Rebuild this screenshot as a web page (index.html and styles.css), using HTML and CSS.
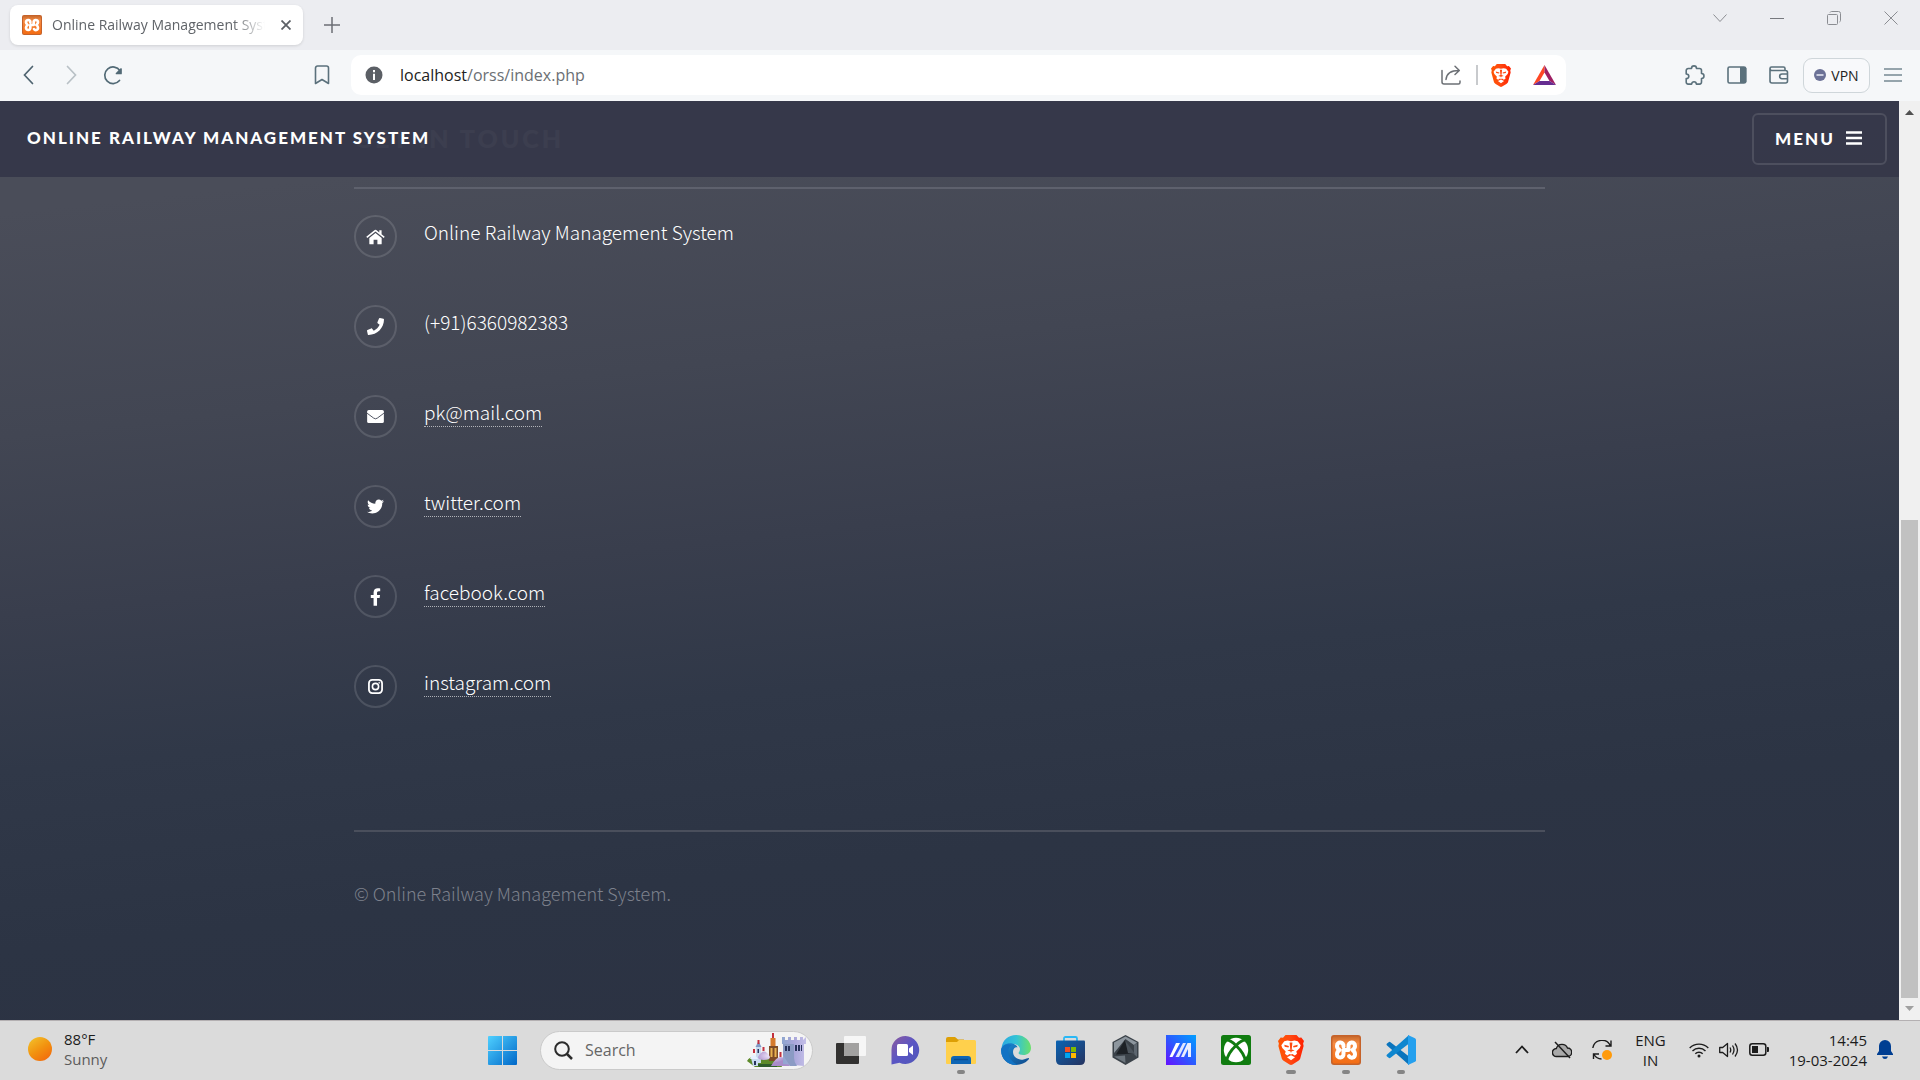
FILE: index.html
```html
<!DOCTYPE html>
<html lang="en">
<head>
<meta charset="utf-8">
<title>Online Railway Management System</title>
<link rel="stylesheet" href="styles.css">
</head>
<body>
<svg class="sprite" aria-hidden="true">
  <defs>
    <linearGradient id="g-brave" x1="0" x2="1"><stop offset="0" stop-color="#ff5500"/><stop offset="0.45" stop-color="#ff4a12"/><stop offset="1" stop-color="#ff2000"/></linearGradient>
    <linearGradient id="g-xampp" x1="0" y1="0" x2="0" y2="1"><stop offset="0" stop-color="#c96a2c"/><stop offset="0.25" stop-color="#f58a42"/><stop offset="1" stop-color="#f36c13"/></linearGradient>
  </defs>
  <symbol id="brave" viewBox="0 0 26 30">
    <path fill="url(#g-brave)" d="M7.5 0h11l2.5 2.8 2.3-.3L26 6l-.9 2.6.5 2.4-3.3 12.2c-.4 1.4-1.200 2-2.300 2.800L14.500 29.500c-.9.600-2.100.600-3 0L6 26c-1.100-.8-1.900-1.400-2.300-2.800L.4 11l.5-2.400L0 6l2.700-3.500 2.300.3z"/>
    <path fill="#fff" d="M9.500 5.500 13 6.200l3.500-.7 3.200.7 3 4-1 2.700-3.400 3.600.7 2.300-2.200 1.700-2.500-1.600-1.300.6-1.300-.6-2.500 1.600L7 18.800l.7-2.300-3.400-3.600-1-2.700 3-4zM9 22.200l4-2 4 2-4 3z"/>
    <path fill="#ff4a12" d="m6.300 9.800 4.600 1.200-.4 1.400-3.800-.7zM19.700 9.800l-4.600 1.200.4 1.400 3.800-.7zM11.600 7.500h2.800l-.6 6.500h-1.600zM9.300 15.800l3.700-1.700 3.700 1.700-3 .4-.7 1.800-.7-1.800z"/>
  </symbol>
  <symbol id="xampp" viewBox="0 0 30 30">
    <rect width="30" height="30" rx="3" fill="#c5622a"/>
    <rect x="1.500" y="1.500" width="27" height="27" rx="2" fill="url(#g-xampp)"/>
    <path fill="none" stroke="#fff" stroke-width="4" stroke-linecap="round" stroke-linejoin="round" d="M12.500 11.500C13 6.500 6 6 6 11c0 2 1 3 2.500 4C7 16 6 17 6 19.200c0 4.800 7 4.300 6.500-.7V15h5v-3.500C17 6.500 24 6 24 11c0 2-1 3-2.500 4 1.500 1 2.500 2 2.500 4.200 0 4-4.500 4.300-6 2"/>
  </symbol>
</svg>

<div class="tabstrip">
  <div class="tab">
    <svg class="tab-favicon"><use href="#xampp"/></svg>
    <span class="tab-title">Online Railway Management System</span>
    <button class="plain" aria-label="Close tab"><svg width="10" height="10" viewBox="0 0 10 10"><path d="M.5.5l9 9M9.500.5l-9 9" stroke="#5c6066" stroke-width="1.800"/></svg></button>
  </div>
  <button class="plain new-tab" aria-label="New tab"><svg width="16" height="16" viewBox="0 0 16 16"><path d="M8 0v16M0 8h16" stroke="#6b6e74" stroke-width="1.500"/></svg></button>
  <div class="window-controls">
    <button class="plain" aria-label="Search tabs"><svg width="14" height="14" viewBox="0 0 14 14" fill="none" stroke="#8b8d92"><path d="M.5 3.500 7 10.500l6.500-7"/></svg></button>
    <button class="plain" aria-label="Minimize"><svg width="14" height="14" viewBox="0 0 14 14"><path d="M0 7.500h14" stroke="#77797e"/></svg></button>
    <button class="plain" aria-label="Restore"><svg width="14" height="14" viewBox="0 0 14 14" fill="none" stroke="#8b8d92"><rect x=".5" y="3.500" width="10" height="10" rx="1"/><path d="M3 1.500Q3.500.5 4.500.5h7q2 0 2 2v7q0 1-1 1.500"/></svg></button>
    <button class="plain" aria-label="Close"><svg width="14" height="14" viewBox="0 0 14 14"><path d="M.5.5l13 13M13.500.5l-13 13" stroke="#8b8d92"/></svg></button>
  </div>
</div>

<div class="toolbar">
  <div class="nav-buttons">
    <button class="plain" aria-label="Back"><svg width="20" height="20" viewBox="0 0 20 20" fill="none" stroke="#4f6470" stroke-width="1.700" stroke-linecap="round"><path d="M13.500 1.500 5.500 10l8 8.500"/></svg></button>
    <button class="plain" aria-label="Forward"><svg width="20" height="20" viewBox="0 0 20 20" fill="none" stroke="#b9c1c6" stroke-width="1.700" stroke-linecap="round"><path d="m6.500 1.500 8 8.500-8 8.500"/></svg></button>
    <button class="plain" aria-label="Reload"><svg width="20" height="20" viewBox="0 0 20 20" fill="none" stroke="#526a76" stroke-width="1.700" stroke-linecap="round"><path d="M16.500 15.500a8.300 8.300 0 1 1 .5-9.800"/><path d="M18 4v4.500h-4.500z" fill="#526a76" stroke-linejoin="round"/></svg></button>
  </div>
  <button class="plain bookmark" aria-label="Bookmark"><svg width="16" height="20" viewBox="0 0 16 20" fill="none" stroke="#5b717c" stroke-width="1.600" stroke-linejoin="round"><path d="M1.500 3a2 2 0 0 1 2-2h9a2 2 0 0 1 2 2v15.500L8 14.500l-6.500 4z"/></svg></button>
  <div class="address">
    <svg width="18" height="18" viewBox="0 0 18 18"><circle cx="9" cy="9" r="8.500" fill="#5b5f65"/><path d="M9 4v2.200M9 7.800V14" stroke="#fff" stroke-width="2"/></svg>
    <a class="url" href="#"><b>localhost</b>/orss/index.php</a>
    <button class="plain" aria-label="Share"><svg width="20" height="20" viewBox="0 0 20 20" fill="none" stroke="#6c7075" stroke-width="1.500" stroke-linecap="round" stroke-linejoin="round"><path d="M1 5.500V17a2 2 0 0 0 2 2h14.500a1.500 1.500 0 0 0 1.500-1.500V16M5 14.500C5.500 8.500 9.500 5.500 18 5.500M14 1.200l4.300 4.300L14 9.500"/></svg></button>
    <span class="address-rule"></span>
    <button class="plain" aria-label="Brave Shields"><svg width="20" height="23"><use href="#brave"/></svg></button>
    <button class="plain rewards" aria-label="Brave Rewards"><svg width="23" height="20" viewBox="0 0 23 20"><path fill="#ff4724" d="M11.500 0 0 20l6.500-4 5-8.500z"/><path fill="#9e1f63" d="M11.500 0 23 20l-6.500-4-5-8.500z"/><path fill="#662d91" d="M0 20h23l-6.500-4h-10z"/></svg></button>
  </div>
  <div class="extensions">
    <button class="plain" aria-label="Extensions"><svg width="20" height="20" viewBox="0 0 20 20" fill="none" stroke="#5b717c" stroke-width="1.600" stroke-linejoin="round"><path d="M1.200 5.500a2 2 0 0 1 2-2h3.300C6.500 0 11.500 0 11.500 3.500h3a2 2 0 0 1 2 2v3c3.300 0 3.300 5 0 5v3.600a2 2 0 0 1-2 2h-3.200c0-3.200-4.600-3.200-4.600 0H3.200a2 2 0 0 1-2-2v-3.500c3.500 0 3.500-4.600 0-4.600z"/></svg></button>
    <button class="plain" aria-label="Sidebar"><svg width="20" height="18" viewBox="0 0 20 18"><rect x="1" y="1" width="17.500" height="16" rx="1.500" fill="none" stroke="#5b717c" stroke-width="1.600"/><path fill="#5b717c" d="M13 1h5q1.500 0 1.500 1.500v13Q19.500 17 18 17h-5z"/></svg></button>
    <button class="plain" aria-label="Wallet"><svg width="20" height="18" viewBox="0 0 20 18" fill="none" stroke="#5b717c" stroke-width="1.600"><path d="M1 2.500V15a2 2 0 0 0 2 2h13.500a2 2 0 0 0 2-2V6.500a2 2 0 0 0-2-2H3a2 2 0 0 1-2-2A1.500 1.500 0 0 1 2.500 1h12a1.500 1.500 0 0 1 1.500 1.500v2M18.500 8H13a2.300 2.300 0 0 0 0 4.700h5.500"/></svg></button>
    <button class="vpn"><svg width="12" height="12" viewBox="0 0 12 12"><circle cx="6" cy="6" r="6" fill="#6b7196"/><path d="M2.500 6h7" stroke="#e4e6f2" stroke-width="1.600"/></svg>VPN</button>
    <button class="plain" aria-label="Browser menu"><svg width="18" height="14" viewBox="0 0 18 14"><path d="M0 1h18M0 7h18M0 13h18" stroke="#768992" stroke-width="1.400"/></svg></button>
  </div>
</div>

<div class="viewport">
  <div class="page">
    <header class="site-header">
      <h1><a href="#">Online Railway Management System</a></h1>
      <button class="menu">Menu<svg width="16" height="14" viewBox="0 0 16 14"><path d="M0 1.500h16M0 7h16M0 12.500h16" stroke="#fff" stroke-width="2.600"/></svg></button>
    </header>
    <div class="inner">
      <h2>Get in touch</h2>
      <ul class="contact">
        <li><span class="badge"><svg width="19" height="16" viewBox="0 0 20 16" fill="#fff"><path d="M10 3.800 3.500 9v6a.7.700 0 0 0 .7.700H8V11h4v4.700h3.800a.7.700 0 0 0 .7-.7V9z"/><path d="M9.200.6a1.300 1.300 0 0 1 1.600 0L14 3.200V1h2.400v4.100l3.300 2.700-1 1.200L10 2.100 1.300 9l-1-1.200z"/></svg></span><span>Online Railway Management System</span></li>
        <li><span class="badge"><svg width="17" height="17" viewBox="0 0 512 512" fill="#fff"><path d="M493.400 24.600l-104-24c-11.300-2.600-22.900 3.300-27.500 13.900l-48 112c-4.200 9.800-1.400 21.300 6.900 28l60.600 49.600c-36 76.700-98.900 140.500-177.200 177.200l-49.600-60.600c-6.800-8.300-18.200-11.100-28-6.900l-112 48C3.900 366.500-2 378.100.6 389.400l24 104C27.100 504.200 36.700 512 48 512c256.100 0 464-207.500 464-464 0-11.200-7.700-20.900-18.600-23.400z"/></svg></span><span>(+91)6360982383</span></li>
        <li><span class="badge"><svg width="17" height="13" viewBox="0 0 18 14"><rect width="18" height="14" rx="1.700" fill="#fff"/><path d="M0 3.500 7 8.700q2 1.600 4 0l7-5.200" fill="none" stroke="#454a58" stroke-width="1"/></svg></span><a href="#">pk@mail.com</a></li>
        <li><span class="badge"><svg width="17" height="17" viewBox="0 0 512 512" fill="#fff"><path d="M459.400 151.700c.3 4.500.3 9.100.3 13.600 0 138.700-105.600 298.600-298.600 298.600-59.500 0-114.700-17.200-161.100-47.100 8.400 1 16.600 1.300 25.300 1.300 49.100 0 94.200-16.600 130.300-44.800-46.100-1-84.800-31.200-98.100-72.800 6.500 1 13 1.600 19.800 1.600 9.400 0 18.800-1.300 27.600-3.600-48.100-9.700-84.100-52-84.100-103v-1.300c14 7.800 30.200 12.700 47.400 13.300-28.300-18.800-46.800-51-46.800-87.400 0-19.500 5.200-37.400 14.300-53 51.700 63.700 129.300 105.300 216.400 109.800-1.600-7.800-2.600-15.900-2.600-24 0-57.800 46.800-104.900 104.900-104.900 30.200 0 57.500 12.700 76.700 33.100 23.700-4.500 46.500-13.300 66.600-25.300-7.800 24.400-24.400 44.800-46.100 57.800 21.100-2.300 41.600-8.100 60.400-16.200-14.300 20.800-32.200 39.300-52.600 54.300z"/></svg></span><a href="#">twitter.com</a></li>
        <li><span class="badge"><svg width="11" height="18" viewBox="0 0 320 512" fill="#fff"><path d="M279.100 288l14.200-92.700h-88.900v-60.100c0-25.300 12.400-50.100 52.200-50.100h40.400V6.300S260.400 0 225.400 0c-73.200 0-121.100 44.400-121.100 124.700v70.600H22.900V288h81.400v224h100.200V288z"/></svg></span><a href="#">facebook.com</a></li>
        <li><span class="badge"><svg width="15" height="15" viewBox="0 0 16 16" fill="none" stroke="#fff"><rect x="1" y="1" width="14" height="14" rx="3.500" stroke-width="1.900"/><circle cx="8" cy="8" r="3.300" stroke-width="1.700"/><circle cx="12" cy="4" r=".6" fill="#fff" stroke-width=".6"/></svg></span><a href="#">instagram.com</a></li>
      </ul>
      <footer>© Online Railway Management System.</footer>
    </div>
  </div>
  <div class="scrollbar">
    <svg width="9" height="5" viewBox="0 0 9 5"><path d="M0 5 4.500 0 9 5z" fill="#505050"/></svg>
    <span class="thumb"></span>
    <svg width="9" height="5" viewBox="0 0 9 5"><path d="M0 0 4.500 5 9 0z" fill="#a0a0a0"/></svg>
  </div>
</div>

<div class="taskbar">
  <div class="weather">
    <span class="sun"></span>
    <span><span class="temp">88°F</span><br>Sunny</span>
  </div>
  <div class="apps">
    <button class="plain app" aria-label="Start"><svg width="29" height="29" viewBox="0 0 29 29"><defs><linearGradient id="g-win" x1="0" y1="0" x2="1" y2="1"><stop offset="0" stop-color="#4fd0ff"/><stop offset="1" stop-color="#0067c8"/></linearGradient></defs><path fill="url(#g-win)" d="M1 0h13v14H0V1q0-1 1-1zM15 0h13q1 0 1 1v13H15zM0 15h14v14H1q-1 0-1-1zM15 15h14v13q0 1-1 1H15z"/></svg></button>
    <label class="search">
      <svg width="19" height="19" viewBox="0 0 19 19" fill="none" stroke="#2b2b2b"><circle cx="8" cy="8" r="6.800" stroke-width="2"/><path d="m13 13 5 5" stroke-width="2.500"/></svg>
      <input type="text" placeholder="Search" aria-label="Search">
      <svg width="60" height="34" viewBox="0 0 60 34">
        <defs><linearGradient id="g-wall" x1="0" x2="1"><stop offset="0" stop-color="#8fa6cf"/><stop offset=".5" stop-color="#a9a6da"/><stop offset="1" stop-color="#c4bfe8"/></linearGradient><radialGradient id="g-dome" cx=".4" cy=".3"><stop offset="0" stop-color="#f5ecff"/><stop offset="1" stop-color="#a98cc9"/></radialGradient></defs>
        <path fill="#5d8a2a" d="M0 28q3-5 10-4 10-3 22 3l3 7H8z"/><path fill="#2f5c2c" d="M10 31h20v3H12z"/>
        <path fill="#c9dbf0" d="M9 14h5v16H9zM4 25h7v8H6z"/><path fill="#8299c5" d="m8.500 14 3-6 3 6z"/><path fill="#e6f1ff" d="M3 26q3-8 8 0z"/>
        <path fill="#c2313f" d="M10.500 7h2v4h-2zM6 16h2v4H6zM15.500 14h2v4h-2zM25 0h2v6h-2zM32.500 19h2v5h-2z"/>
        <path fill="#d57a2d" d="M23.500 5h5v8h-5z"/><path fill="#7d4a27" d="M22 13h9v15h-9z"/><path fill="#e9b250" d="M23.500 15h2v9h-2zM27.500 15h2v9h-2z"/>
        <path fill="url(#g-dome)" d="M11 24q6-11 12 0 0 3-6 3t-6-3zM24 33q10-18 19 0z"/>
        <path fill="url(#g-wall)" d="M35 4h3v3h3V4h3v3h3V4h3v3h3V4h3v3l3-3v7h-2v22l-21-2V11h-1z"/>
        <path fill="#8b9bc4" d="M36 11h11v14q0 4 3 8H43L36 22z"/>
        <path fill="#27335c" d="M38 13h2v5h-2zM41 13h2v5h-2zM48 12h2v6h-2zM51 12h2v6h-2zM54 12h1v6h-1zM7 28h2v4H7zM10.500 16h1.500v4h-1.500z"/>
      </svg>
    </label>
    <button class="plain app" aria-label="Task view"><svg width="30" height="28" viewBox="0 0 30 28"><rect y="7" width="23" height="21" rx="1" fill="#323130"/><rect x="8" width="22" height="20" rx="1" fill="#f6f6f6"/><path fill="#a2a1a0" d="M8 7h15v13H9q-1 0-1-1z"/></svg></button>
    <button class="plain app" aria-label="Chat"><svg width="29" height="29" viewBox="0 0 29 29"><defs><linearGradient id="g-chat" x1="0" y1="0" x2="1" y2="1"><stop offset="0" stop-color="#8d5a9e"/><stop offset=".5" stop-color="#5a56c4"/><stop offset="1" stop-color="#5057b8"/></linearGradient></defs><path fill="url(#g-chat)" d="M14.500 0a14 14 0 1 1-6 26.800L.5 28.500V14A14 14 0 0 1 14.500 0z"/><rect x="6" y="8" width="11" height="12" rx="1.500" fill="#fff"/><path fill="#fff" d="m18 12.500 4-3v9.500l-4-3z"/></svg></button>
    <button class="plain app running" aria-label="File Explorer"><svg width="30" height="27" viewBox="0 0 30 27"><path fill="#dd9f05" d="M0 8V2q0-2 2-2h7l3 2.500h6V8z"/><path fill="#ffd04c" d="M0 5h11l2-2h15.500Q30 3 30 4.500V26q0 1-1.500 1H1q-1 0-1-1z"/><path fill="#0f66b5" d="M5 27v-5q0-3 3-3h14q3 0 3 3v5z"/><path stroke="#0a4d91" stroke-width="1.400" d="M8 22.500h14"/></svg></button>
    <button class="plain app" aria-label="Edge"><svg width="30" height="30" viewBox="0 0 30 30"><defs><linearGradient id="g-edge1" x1="0" x2="1"><stop offset="0" stop-color="#2aa7e0"/><stop offset=".5" stop-color="#33c3d6"/><stop offset="1" stop-color="#6be06a"/></linearGradient><linearGradient id="g-edge2" x1="0" y1="0" x2="1" y2="1"><stop offset="0" stop-color="#1b8ed8"/><stop offset="1" stop-color="#114a8b"/></linearGradient></defs><path fill="url(#g-edge1)" d="M.5 13C1.500 5 7.500 0 15 0c9 0 15 6.500 15 13 0 4.500-3.500 7-7.500 7-3 0-5-1-5-2 0-.8 1.500-1.500 1.500-4 0-2.500-3-5-7-5C7 9 2 11 .5 13z"/><path fill="url(#g-edge2)" d="M.2 14C1.500 10 6 7.500 10.500 8.300c3.500.6 5.500 2.400 6 4.200-2-1-4.500 1-4.500 4.500 0 5 5 8.500 10.500 7.500 2.500-.5 4-1.500 5-1.500.8 0 .5 1-.2 1.800C24.500 28 20 30 15 30 6.500 30-.8 23 .2 14z"/><path fill="#1273c4" d="M10.500 10C7 12 6.500 17 8 21c1.600 4.500 5 7.500 9 8.800C7 31-.5 23 .2 14 1.500 10 6 8 10.500 10z"/></svg></button>
    <button class="plain app" aria-label="Microsoft Store"><svg width="29" height="29" viewBox="0 0 29 29"><defs><linearGradient id="g-store" x1="0" y1="0" x2="1" y2="1"><stop offset="0" stop-color="#0a64b4"/><stop offset="1" stop-color="#26335f"/></linearGradient></defs><path fill="none" stroke="#2ab8f5" stroke-width="1.800" d="M8 5V2.500Q8 1 9.500 1h10Q21 1 21 2.500V5"/><path fill="url(#g-store)" d="M0 5.500Q0 4.500 1 4.500h27q1 0 1 1V24q0 5-5 5H5q-5 0-5-5z"/><path fill="#f25022" d="M9 11h5v5H9z"/><path fill="#7fba00" d="M15 11h5v5h-5z"/><path fill="#00a4ef" d="M9 17h5v5H9z"/><path fill="#ffb900" d="M15 17h5v5h-5z"/></svg></button>
    <button class="plain app" aria-label="Armoury Crate"><svg width="27" height="30" viewBox="0 0 27 30"><path fill="#3b4249" d="m13.500 0 13 7v15.500l-13 7.500-13-7.500V7z"/><path fill="#8d969e" d="m13.500 1.500 11.500 6-3 2.500-8.500-6L2 18V7.500z"/><path fill="#5d666f" d="m22 10 3-2v14l-3-3z"/><path fill="#1d2126" d="m13 5 8.500 13.500L4 19.500z"/><path fill="#4c545c" d="m13 5 10 14-7-1z"/><path fill="#6b747c" d="m2 21.500 11-1 .5 7.500z"/></svg></button>
    <button class="plain app" aria-label="MyASUS"><svg width="30" height="30" viewBox="0 0 30 30"><defs><linearGradient id="g-asus" x1="1" y1="0" x2="0" y2="1"><stop offset="0" stop-color="#00a0ff"/><stop offset=".5" stop-color="#2a5cff"/><stop offset="1" stop-color="#6610ff"/></linearGradient></defs><path fill="url(#g-asus)" d="M0 0h30v30H0z"/><path fill="#fff" d="M10 8h4L6.500 22h-3z"/><path fill="#dfe5ff" d="M17 8h3l-7 14H9.500z"/><path fill="#e9edff" d="M21.500 8H25v14h-3V14l-4 8h-3z"/></svg></button>
    <button class="plain app" aria-label="Xbox"><svg width="30" height="30" viewBox="0 0 30 30"><rect width="30" height="30" rx="2.500" fill="#107c10"/><circle cx="15" cy="15" r="12.200" fill="#fff"/><path fill="none" stroke="#107c10" stroke-width="3" d="M5 5q4-.5 10 5.500 8.500 8 9.500 16M25 5q-4-.5-10 5.500-8.500 8-9.500 16"/></svg></button>
    <button class="plain app running active" aria-label="Brave"><svg width="26" height="30"><use href="#brave"/></svg></button>
    <button class="plain app running" aria-label="XAMPP"><svg width="30" height="30"><use href="#xampp"/></svg></button>
    <button class="plain app running" aria-label="Visual Studio Code"><svg width="30" height="30" viewBox="0 0 30 30"><path fill="#0a74bd" d="M1 8.500 3 7q.8-.4 1.500.2L23 21.500V30L.8 10.200Q0 9.300 1 8.500z"/><path fill="#0e86cf" d="M1 21.500 3 23q.8.4 1.500-.2L23 8.500V0L.8 19.800Q0 20.700 1 21.500z"/><path fill="#25a0ee" d="m22 0 7 3.200q1 .5 1 1.500v20.600q0 1-1 1.500L22 30z"/></svg></button>
  </div>
  <div class="tray">
    <svg width="14" height="9" viewBox="0 0 14 9" fill="none" stroke="#1c1c1c" stroke-width="1.800"><path d="m1 8 6-6.500L13 8"/></svg>
    <svg class="cloud" width="20" height="18" viewBox="0 0 20 18"><path fill="#a9a9a9" stroke="#1c1c1c" stroke-width="1.400" d="M4.500 15.500a4 4 0 0 1-.2-8A6 6 0 0 1 15.500 7a4.200 4.200 0 0 1 0 8.500z"/><path stroke="#1c1c1c" stroke-width="1.500" d="m3 1 15 16"/></svg>
    <svg width="20" height="20" viewBox="0 0 20 20" fill="none" stroke="#1c1c1c" stroke-width="1.400"><path d="M.8 8A9.300 9.300 0 0 1 18.500 6M19 .5V6h-5.500M1.500 19v-5H7M2 14.500A9 9 0 0 0 9.500 19"/><circle cx="15" cy="15" r="5" fill="#ff9a0a" stroke="none"/></svg>
    <span class="lang">ENG<br>IN</span>
    <svg width="20" height="16" viewBox="0 0 20 16" fill="none" stroke="#1c1c1c" stroke-width="1.400"><path d="M.7 6a13 13 0 0 1 18.600 0M3.500 9a9.200 9.200 0 0 1 13 0M6.300 11.800a5.200 5.200 0 0 1 7.400 0"/><circle cx="10" cy="14" r="1.500" fill="#1c1c1c" stroke="none"/></svg>
    <svg width="20" height="16" viewBox="0 0 20 16" fill="none" stroke="#1c1c1c" stroke-width="1.300" stroke-linejoin="round"><path d="M.7 5.500h3L8.500 1.500v13L3.700 10.500h-3zM11 5.500q1.500 2.500 0 5M13.500 3.500q3 4.500 0 9M16 1.500q5 6.500 0 13"/></svg>
    <svg width="20" height="13" viewBox="0 0 20 13"><rect x=".8" y=".8" width="16" height="11.400" rx="2.500" fill="none" stroke="#1c1c1c" stroke-width="1.500"/><path fill="#1c1c1c" d="M3 3h6v7H3zM18 4h1q1 0 1 1v3q0 1-1 1h-1z"/></svg>
    <span class="clock">14:45<br>19-03-2024</span>
    <svg width="16" height="19" viewBox="0 0 16 19" fill="#003e92"><path d="M8 0a6 6 0 0 1 6 6v5l2 3v1H0v-1l2-3V6a6 6 0 0 1 6-6zM5 16.500h6q-.8 2.500-3 2.500t-3-2.500z"/></svg>
  </div>
</div>
</body>
</html>
```
FILE: styles.css
```css
* {
  box-sizing: border-box;
}

body {
  margin: 0;
  height: 100vh;
  display: flex;
  flex-direction: column;
  overflow: hidden;
  font-family: "Open Sans", "Noto Sans", sans-serif;
  font-size: 14px;
}

svg {
  display: block;
  flex: none;
}

.sprite {
  position: absolute;
  width: 0;
  height: 0;
}

.plain {
  display: flex;
  align-items: center;
  justify-content: center;
  padding: 0;
  border: 0;
  background: none;
}

/* Browser window */

.tabstrip {
  flex: none;
  height: 50px;
  display: flex;
  align-items: flex-start;
  padding: 5px 22px 0 10px;
  background: #ecedf1;
}

.tab {
  width: 293px;
  height: 40px;
  display: flex;
  align-items: center;
  gap: 10px;
  padding: 0 12px;
  border-radius: 8px;
  background: #fff;
  box-shadow: 0 1px 3px rgba(0, 0, 0, 0.12);
}

.tab-favicon {
  width: 20px;
  height: 20px;
}

.tab-title {
  flex: 1;
  margin-right: 6px;
  padding-bottom: 2px;
  overflow: hidden;
  white-space: nowrap;
  color: #5f6368;
  mask-image: linear-gradient(to right, #000 85%, transparent);
}

.new-tab {
  margin-left: 21px;
  height: 40px;
}

.window-controls {
  margin-left: auto;
  display: flex;
  gap: 43px;
  padding-top: 6px;
}

.toolbar {
  flex: none;
  height: 51px;
  display: flex;
  align-items: center;
  padding: 0 18px 1px 19px;
  background: #f5f7f9;
}

.nav-buttons {
  display: flex;
  gap: 22px;
}

.bookmark {
  margin-left: 191px;
}

.address {
  flex: 1;
  height: 40px;
  display: flex;
  align-items: center;
  margin: 0 119px 0 21px;
  padding: 0 10px 0 14px;
  border-radius: 10px;
  background: #fff;
}

.url {
  flex: 1;
  margin-left: 17px;
  padding-bottom: 1px;
  font-size: 16px;
  color: #6b6f74;
  text-decoration: none;
}

.url b {
  font-weight: 400;
  color: #222;
}

.address-rule {
  width: 2px;
  height: 20px;
  margin: 0 13px 0 15px;
  background: #c8cacd;
}

.rewards {
  margin-left: 22px;
}

.extensions {
  display: flex;
  align-items: center;
  gap: 22px;
}

.vpn {
  width: 67px;
  height: 35px;
  display: flex;
  align-items: center;
  justify-content: center;
  gap: 5px;
  margin: 0 -8px;
  padding: 0;
  border: 1px solid #cfd6da;
  border-radius: 9px;
  background: #f8f9fb;
  font: inherit;
  color: #222;
}

.viewport {
  flex: 1;
  min-height: 0;
  display: flex;
}

.scrollbar {
  width: 21px;
  display: flex;
  flex-direction: column;
  align-items: center;
  padding: 9px 0;
  background: #f0f0f0;
}

.thumb {
  width: 17px;
  height: 478px;
  margin: auto 0 8px;
  background: #c1c1c1;
}

/* Web page */

.page {
  position: relative;
  flex: 1;
  background: linear-gradient(174deg, #4a4d59 10%, #424653 30%, #393e4d 46%, #303848 60%, #2c3444 76%, #2b3142 100%);
  font-family: "Noto Sans CJK JP", sans-serif;
  font-weight: 300;
  color: #fff;
  overflow: hidden;
}

.site-header {
  position: absolute;
  inset: 0 0 auto 0;
  height: 76px;
  display: flex;
  align-items: center;
  justify-content: space-between;
  padding: 0 12px 0 27px;
  background: rgba(54, 56, 73, 0.97);
}

h1,
h2,
.menu {
  margin: 0;
  font-family: Lato, sans-serif;
  font-weight: 900;
  text-transform: uppercase;
  letter-spacing: 2px;
}

h1 {
  padding-bottom: 2px;
  font-size: 17px;
  line-height: 24px;
}

h1 a {
  color: #fff;
  text-decoration: none;
}

.menu {
  width: 135px;
  height: 52px;
  display: flex;
  align-items: center;
  justify-content: center;
  gap: 11px;
  padding: 0 2px 2px 0;
  border: 2px solid #4d4f5e;
  border-radius: 6px;
  background: none;
  font-size: 17px;
  color: #fff;
}

.inner {
  max-width: 1191px;
  margin: 0 auto;
}

h2 {
  padding: 18px 0 30px;
  border-bottom: 2px solid #5e616d;
  font-size: 25px;
  line-height: 38px;
  letter-spacing: 3px;
}

.contact {
  display: flex;
  flex-direction: column;
  gap: 47px;
  margin: 0;
  padding: 26px 0 122px;
  list-style: none;
  font-size: 19px;
  line-height: 24px;
}

.contact li {
  display: flex;
  align-items: flex-start;
  gap: 27px;
}

.contact li > :last-child {
  margin-top: 5px;
}

.contact a {
  padding-bottom: 2px;
  border-bottom: 1px dotted rgba(255, 255, 255, 0.6);
  color: #fff;
  text-decoration: none;
}

.badge {
  width: 43px;
  height: 43px;
  display: flex;
  align-items: center;
  justify-content: center;
  border: 2px solid rgba(255, 255, 255, 0.13);
  border-radius: 50%;
}

footer {
  padding: 46px 0;
  border-top: 2px solid #4a4f5c;
  font-size: 18px;
  line-height: 30px;
  color: #7d818c;
}

/* Taskbar */

.taskbar {
  flex: none;
  height: 60px;
  display: flex;
  align-items: center;
  border-top: 1px solid #b4b0b2;
  background: #dbdbdb;
  font-size: 15px;
  line-height: 20px;
  color: #1c1c1c;
}

.weather {
  flex: 1;
  display: flex;
  align-items: center;
  gap: 12px;
  padding: 0 0 3px 28px;
  color: #5c5c5c;
}

.temp {
  color: #1c1c1c;
}

.sun {
  width: 24px;
  height: 24px;
  border-radius: 50%;
  background: linear-gradient(145deg, #f2c62e, #f2920f 50%, #f2620c);
}

.apps {
  display: flex;
  align-items: center;
  padding: 0 18px 1px 0;
}

.app {
  position: relative;
  width: 55px;
  height: 58px;
}

.running::after {
  content: "";
  position: absolute;
  bottom: 5px;
  width: 8px;
  height: 4px;
  border-radius: 2px;
  background: #858585;
}

.active::after {
  width: 10px;
}

.search {
  width: 273px;
  height: 39px;
  display: flex;
  align-items: center;
  gap: 12px;
  margin: 0 10px;
  padding: 0 5px 0 13px;
  border: 1px solid #cacaca;
  border-radius: 20px;
  background: #f4f4f4;
}

.search input {
  flex: 1;
  min-width: 0;
  padding: 0;
  border: 0;
  background: none;
  font: inherit;
  font-size: 16px;
}

.search input::placeholder {
  color: #666;
  opacity: 1;
}

.tray {
  flex: 1;
  display: flex;
  align-items: center;
  justify-content: flex-end;
  gap: 10px;
  padding: 0 27px 2px 0;
}

.cloud {
  margin: 0 10px 0 13px;
}

.lang {
  margin: 0 13px;
  text-align: center;
}

.clock {
  margin-left: 10px;
  text-align: right;
}
```
